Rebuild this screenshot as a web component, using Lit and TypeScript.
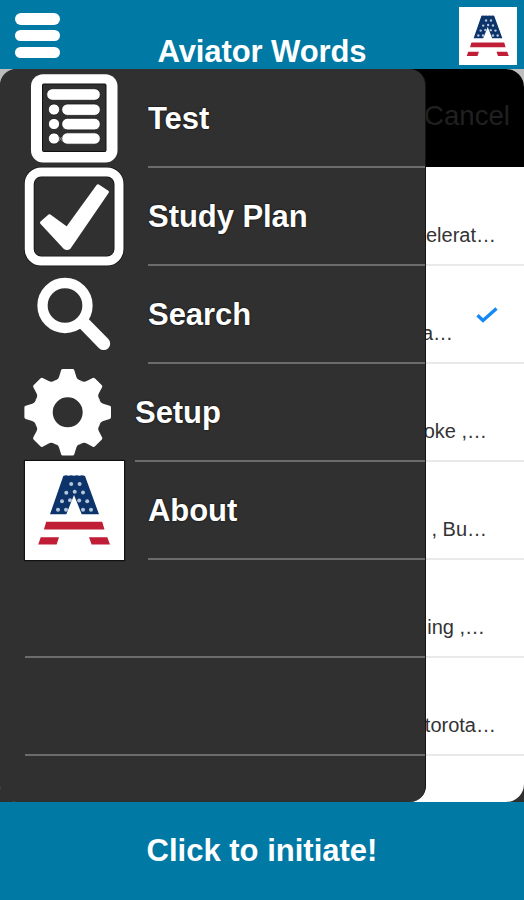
import { LitElement, html, svg, css } from "lit";
import { customElement } from "lit/decorators.js";

const stars = [
  [46.2, 23], [54.6, 23], [41.3, 31.7], [49.7, 30.8], [58, 31.5],
  [37, 40.2], [45, 39.3], [54.2, 39.5], [62.2, 40.2],
  [33, 48.7], [41, 48.7], [58, 48.7], [66, 48.7],
];

@customElement("flag-logo")
class FlagLogo extends LitElement {
  static styles = css`
    :host { display: block; }
    svg { display: block; width: 100%; height: 100%; }
  `;
  render() {
    return html`<svg viewBox="0 0 99 99">
      <rect width="99" height="99" fill="#fff" />
      <path fill="#0c336a" d="M38.3 15 Q41 13.8 43.5 14.8 Q46 13.8 49 14.8 Q52 13.8 54.5 14.8 Q57 13.8 60 15 L74 53.3 H56.7 L49 34 L41.3 53.3 H25Z" />
      ${stars.map(([x, y]) => svg`<circle cx=${x} cy=${y} r="2" fill="#b4c6da" />`)}
      <path fill="#c01e36" d="M21.2 60.7H77.2L79.5 68.5H18.9ZM15.7 76.3H34L31.6 83.5H13.2ZM64 76.3H82.3L85 83.5H66.6Z" />
    </svg>`;
  }
}

const testIcon = html`<svg class="icon" viewBox="24 69 100 98">
  <rect x="31" y="74.3" width="86.5" height="88.2" rx="12" fill="#fff" />
  <rect x="42.5" y="84" width="63.5" height="67.5" rx="1" fill="#303030" stroke="#101010" />
  <g fill="#fff" stroke="#151515" stroke-width=".8">
    <rect x="46.7" y="88.7" width="53.6" height="11.6" rx="5.8" />
    <circle cx="54" cy="109.5" r="5.6" />
    <circle cx="54" cy="124" r="5.6" />
    <circle cx="54" cy="138.5" r="5.6" />
    <rect x="61.7" y="104" width="38.6" height="11.4" rx="5.7" />
    <rect x="61.7" y="118.3" width="38.6" height="11.6" rx="5.8" />
    <rect x="61.7" y="132.8" width="38.6" height="11.4" rx="5.7" />
  </g>
  <path d="M58.5 136.5l4 5M62.5 136.5l-4 5" stroke="#888" />
</svg>`;

const planIcon = html`<svg class="icon" viewBox="24 168 100 98">
  <rect x="29.2" y="172" width="89.8" height="89" rx="12" fill="none" stroke="#111" stroke-width="10.6" />
  <rect x="29.2" y="172" width="89.8" height="89" rx="12" fill="none" stroke="#fff" stroke-width="9" />
  <path fill="#fff" stroke="#fff" stroke-width="3" stroke-linejoin="round"
    d="M41.5 222.7 L49.5 215.7 L67 228.5 L98 185.7 L107.5 192 L69.5 247.5 Q67 249.5 64.5 247.5Z" />
</svg>`;

const searchIcon = html`<svg class="icon" viewBox="24 266 100 98">
  <g fill="none" stroke="#fff">
    <circle cx="65" cy="305.5" r="22.5" stroke-width="10.3" />
    <path d="M83 322.5L103.7 343.6" stroke-width="13" stroke-linecap="round" />
  </g>
</svg>`;

const gearIcon = html`<svg class="icon gear" viewBox="24 364 88 98">
  <g transform="translate(67.7 412.3)" fill="#fff">
    <circle r="24" fill="none" stroke="#fff" stroke-width="18" />
    ${[0, 45, 90, 135, 180, 225, 270, 315].map(
      (a) => svg`<path transform="rotate(${a})" d="M-5 -43.3H5Q6.2 -43.3 6.6 -42L8.6 -35.5Q9.6 -32.2 13.2 -31.8L11 -26H-11L-13.2 -31.8Q-9.6 -32.2 -8.6 -35.5L-6.6 -42Q-6.2 -43.3 -5 -43.3Z" />`,
    )}
  </g>
</svg>`;

const menu = [
  { label: "Test", icon: testIcon },
  { label: "Study Plan", icon: planIcon },
  { label: "Search", icon: searchIcon },
  { label: "Setup", icon: gearIcon },
  { label: "About", icon: html`<flag-logo class="about"></flag-logo>` },
];

const words = [
  { text: "elerat…", cls: "" },
  { text: "a…", cls: "checked" },
  { text: "oke ,…", cls: "mid" },
  { text: ", Bu…", cls: "mid" },
  { text: "ing ,…", cls: "near" },
  { text: "torota…", cls: "" },
];

@customElement("app-root")
class AppRoot extends LitElement {
  static styles = css`
    :host {
      display: flex;
      flex-direction: column;
      width: 524px;
      height: 900px;
      overflow: hidden;
      font-family: "Liberation Sans", Arial, sans-serif;
      background: #0079a5;
    }
    * { box-sizing: border-box; }
    header {
      flex: none;
      height: 69px;
      display: grid;
      grid-template-columns: 66px 1fr 66px;
      color: #fff;
    }
    .burger {
      display: flex;
      flex-direction: column;
      gap: 5.5px;
      padding: 13.3px 0 0 15.3px;
    }
    .burger i { width: 44.5px; height: 11.3px; border-radius: 6px; background: #fff; }
    h1 {
      margin: 0;
      font-size: 31px;
      line-height: 36px;
      padding-top: 34px;
      text-align: center;
      white-space: nowrap;
      letter-spacing: -0.1px;
    }
    .brand { width: 58px; height: 58px; margin: 6.5px 0 0 .5px; }
    main {
      position: relative;
      flex: none;
      height: 733px;
      background: linear-gradient(#bdbdbd 50%, #303030 50%);
    }
    .list {
      height: 100%;
      border-radius: 18px;
      background: #fff;
      overflow: hidden;
      color: #333;
    }
    .bar {
      height: 98px;
      background: #000;
      color: #202020;
      font-size: 27.6px;
      line-height: 32px;
      text-align: right;
      padding: 31px 14px 0 0;
    }
    .word {
      height: 98px;
      border-bottom: 2px solid #e9e9e9;
      display: flex;
      justify-content: flex-end;
      align-items: flex-start;
      padding: 56px 28px 0 0;
      font-size: 20px;
      line-height: 23px;
    }
    .word:nth-child(2) { height: 99px; padding-top: 57px; }
    .mid { padding-right: 37px; }
    .near { padding-right: 39px; }
    .checked { padding-right: 26px; }
    .tick { width: 22px; height: 16px; margin: -15px 0 0 23px; }
    .drawer {
      position: absolute;
      left: 0;
      top: 0;
      width: 426px;
      height: 733px;
      border-radius: 16px;
      background: #303030;
      border-right: 1px solid #151515;
      color: #fff;
      overflow: hidden;
    }
    .row { height: 98px; padding-left: 24px; display: flex; }
    .row:first-child { height: 99px; }
    .icon { flex: none; width: 100px; height: 98px; overflow: visible; }
    .gear { width: 88px; }
    .about { flex: none; width: 99px; height: 99px; margin: -1px 0 0 1px; box-shadow: 0 0 1px 1px #111; }
    .label {
      flex: 1;
      margin-left: 24px;
      border-bottom: 2px solid #6c6c6c;
      font-size: 31px;
      line-height: 36px;
      padding-top: 31px;
      font-weight: bold;
      letter-spacing: -0.05px;
      text-shadow: 0 0 2px #000;
    }
    .row:first-child .label { padding-top: 32px; }
    .gear + .label { margin-left: 23px; }
    .about + .label { margin-left: 24px; }
    .blank { margin-left: 1px; }
    footer {
      flex: none;
      height: 98px;
      padding-top: 31px;
      color: #fff;
      font-size: 31px;
      line-height: 36px;
      font-weight: bold;
      text-align: center;
    }
  `;

  render() {
    return html`
      <header>
        <div class="burger"><i></i><i></i><i></i></div>
        <h1>Aviator Words</h1>
        <flag-logo class="brand"></flag-logo>
      </header>
      <main>
        <div class="list">
          <div class="bar">Cancel</div>
          ${words.map(
            (w) => html`<div class="word ${w.cls}">
              <span>${w.text}</span>
              ${w.cls === "checked"
                ? html`<svg class="tick" viewBox="0 0 22 16"><path d="M1.5 8.2L7 13.5L20.5 1.5" fill="none" stroke="#1489f5" stroke-width="3.4" /></svg>`
                : ""}
            </div>`,
          )}
        </div>
        <nav class="drawer">
          ${menu.map((m) => html`<div class="row">${m.icon}<div class="label">${m.label}</div></div>`)}
          <div class="row"><div class="label blank"></div></div>
          <div class="row"><div class="label blank"></div></div>
        </nav>
      </main>
      <footer>Click to initiate!</footer>
    `;
  }
}
